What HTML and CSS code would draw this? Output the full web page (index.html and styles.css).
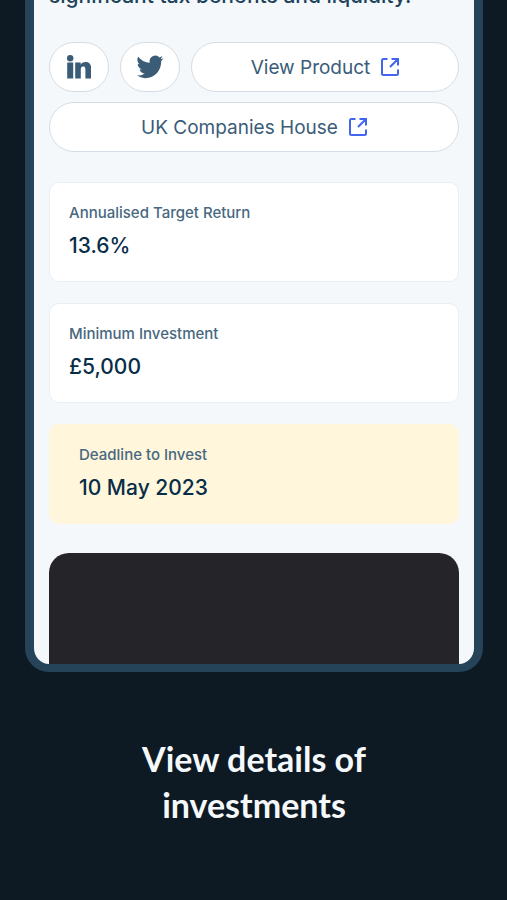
FILE: index.html
```html
<!DOCTYPE html>
<html lang="en">
<head>
<meta charset="utf-8">
<meta name="viewport" content="width=device-width, initial-scale=1">
<title>View details of investments</title>
<link rel="stylesheet" href="styles.css">
</head>
<body>
<main class="promo">
  <section class="phone">
    <p class="summary">significant tax benefits and liquidity.</p>
    <nav class="links">
      <a class="pill pill-icon" href="#" aria-label="LinkedIn">
        <svg width="24" height="24" viewBox="0 0 24 24" fill="currentColor" aria-hidden="true">
          <circle cx="3.200" cy="3.200" r="3.200"/>
          <path d="M.2 7.500h6V23.500h-6zM8.200 7.500h5.500v2.200c.8-1.500 2.400-2.600 4.700-2.600 4.800 0 5.800 3.200 5.800 7.300v9.100h-5.800v-8c0-2 0-3.900-2.200-3.900s-2.400 1.700-2.400 3.800v8.100H8.200z"/>
        </svg>
      </a>
      <a class="pill pill-icon" href="#" aria-label="Twitter">
        <svg width="28" height="28" viewBox="0 0 24 24" fill="currentColor" aria-hidden="true">
          <path d="M23.500 4.570l-2.370.77 1.600-2.720-2.570 1.180a4.920 4.920 0 0 0-8.380 4.480C7.690 8.090 4.070 6.130 1.840 3.160a4.820 4.820 0 0 0-.67 2.480c0 1.710.87 3.210 1.990 4.100l-1.630-.42a4.920 4.920 0 0 0 3.550 4.690l-2 .08a4.940 4.940 0 0 0 4.400 3.420A9.870 9.870 0 0 1 .8 19.340a14 14 0 0 0 6.950 2.210c9.050 0 13.800-7.300 13.800-13.780v-.63z"/>
        </svg>
      </a>
      <a class="pill pill-text" href="#">View Product
        <svg class="external" width="18" height="18" viewBox="0 0 18 18" aria-hidden="true">
          <path d="M6.500 1H2.500Q1 1 1 2.500v13Q1 17 2.500 17h13Q17 17 17 15.500V11.500M10.500 1H17v6.500M17 1L9 9"/>
        </svg>
      </a>
      <a class="pill pill-text" href="#">UK Companies House
        <svg class="external" width="18" height="18" viewBox="0 0 18 18" aria-hidden="true">
          <path d="M6.500 1H2.500Q1 1 1 2.500v13Q1 17 2.500 17h13Q17 17 17 15.500V11.500M10.500 1H17v6.500M17 1L9 9"/>
        </svg>
      </a>
    </nav>
    <dl class="facts">
      <div class="fact"><dt>Annualised Target Return</dt><dd>13.6%</dd></div>
      <div class="fact"><dt>Minimum Investment</dt><dd>£5,000</dd></div>
      <div class="fact fact-deadline"><dt>Deadline to Invest</dt><dd>10 May 2023</dd></div>
    </dl>
    <div class="media"></div>
  </section>
  <h1 class="caption">View details of<br>investments</h1>
</main>
</body>
</html>
```
FILE: styles.css
```css
* {
  box-sizing: border-box;
}

body {
  margin: 0;
  background: #0e1a23;
  font-family: Inter, "Liberation Sans", sans-serif;
}

.promo {
  min-height: 100vh;
  padding: 0 24px 0 25px;
  overflow: hidden;
}

.phone {
  margin-top: -20px;
  padding: 0 15px;
  border: solid #25445a;
  border-width: 0 9px 8px;
  border-radius: 0 0 24px 24px;
  background: #f4f8fb;
  overflow: hidden;
}

.summary {
  margin: 0 0 30px;
  color: #20435a;
  font-size: 21px;
  font-weight: 500;
  line-height: 32px;
  white-space: nowrap;
}

.links {
  display: flex;
  flex-wrap: wrap;
  gap: 10px 11px;
}

.pill {
  display: flex;
  align-items: center;
  justify-content: center;
  height: 50px;
  border: 1px solid #d5dce3;
  border-radius: 25px;
  background: #fff;
  color: #3a5c77;
  text-decoration: none;
}

.pill-icon {
  width: 60px;
}

.pill-text {
  flex: 1 0 auto;
  gap: 11px;
  font-size: 19px;
}

.external {
  fill: none;
  stroke: #4165ee;
  stroke-width: 2;
}

.facts {
  display: grid;
  gap: 21px;
  margin: 30px 0 29px;
}

.fact {
  padding: 19px;
  border: 1px solid #eaeff3;
  border-radius: 10px;
  background: #fff;
}

.fact dt {
  color: #486880;
  font-size: 15px;
  font-weight: 500;
  line-height: 22px;
}

.fact dd {
  margin: 6px 0 0;
  color: #082d47;
  font-size: 21px;
  font-weight: 500;
  line-height: 32px;
}

.fact-deadline {
  padding-left: 29px;
  border-color: #fff6dc;
  background: #fff6dc;
}

.media {
  height: 111px;
  border-radius: 20px 20px 0 0;
  background: #252429;
}

.caption {
  margin: 64px 0 0;
  color: #f5f9fc;
  font-family: Lato, Inter, sans-serif;
  font-size: 34px;
  font-weight: 700;
  line-height: 46px;
  text-align: center;
}
```
